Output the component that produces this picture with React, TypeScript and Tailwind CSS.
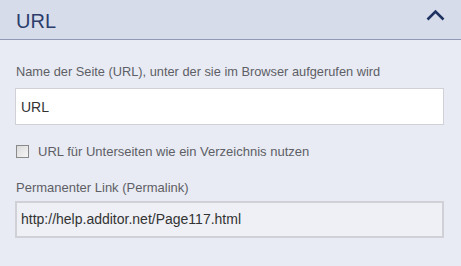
import { useState } from 'react';

export default function App() {
  const [open] = useState(true);
  const [asFolder, setAsFolder] = useState(false);

  return (
    <div className="w-[461px] h-[266px] bg-[#e8ebf3] font-['Liberation_Sans',Arial,sans-serif]">
      {/* Header */}
      <div className="h-[40px] flex items-center justify-between pl-4 pr-[16px] bg-[#d6dcea] border-b border-[#8f98b4]">
        <span className="text-[20px] leading-none text-[#2c3d6c] pt-[3px]">URL</span>
        <svg width="19" height="12" viewBox="0 0 19 12" className="mb-[9px]">
          <path d="M1.5 10.5 L9.5 2.5 L17.5 10.5" fill="none" stroke="#1f3363" strokeWidth="2.6" />
        </svg>
      </div>

      {open && (
        <div className="px-[15px] pt-[24px]">
          <label className="block text-[12.8px] leading-[16px] text-[#5e5e66] pl-px">
            Name der Seite (URL), unter der sie im Browser aufgerufen wird
          </label>
          <input
            defaultValue="URL"
            className="mt-[8px] w-[429px] h-[37px] bg-white border border-[#cfd1d6] px-[5px] text-[14px] text-[#333] outline-none"
          />

          <label className="mt-[17px] flex items-center gap-[9px] text-[13px] text-[#5e5e66] pl-px cursor-pointer">
            <span
              onClick={() => setAsFolder(!asFolder)}
              className="w-[13px] h-[13px] border border-[#8a8a8a] bg-gradient-to-br from-[#dcdcdc] to-[#f5f5f5]"
            />
            URL für Unterseiten wie ein Verzeichnis nutzen
          </label>

          <label className="mt-[18px] block text-[13px] leading-[16px] text-[#5e5e66] pl-px">
            Permanenter Link (Permalink)
          </label>
          <input
            readOnly
            value="http://help.additor.net/Page117.html"
            className="mt-[5px] w-[429px] h-[37px] bg-[#eef0f5] border-2 border-[#cfd1d6] px-[4px] text-[14px] text-[#333] outline-none"
          />
        </div>
      )}
    </div>
  );
}
